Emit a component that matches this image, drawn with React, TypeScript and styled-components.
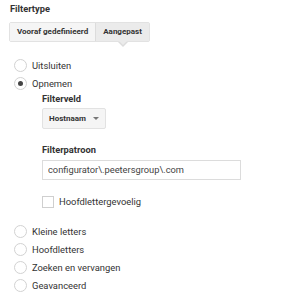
import React, { useState } from 'react';
import styled, { createGlobalStyle } from 'styled-components';

const GlobalStyle = createGlobalStyle`
  body {
    margin: 0;
    background: #fff;
    font-family: Roboto, "Liberation Sans", Arial, sans-serif;
    color: #333;
  }
`;

const Wrapper = styled.div`
  padding: 3px 10px 0 10px;
`;

const Heading = styled.div`
  font-size: 9.3px;
  font-weight: 700;
  color: #333;
  line-height: 12px;
  margin-bottom: 4px;
`;

const TabGroup = styled.div`
  display: inline-flex;
  margin-left: -1px;
  border: 1px solid #e2e2e2;
  border-radius: 2px;
  background: #f5f5f5;
`;

const Tab = styled.div<{ $active?: boolean }>`
  position: relative;
  height: 18px;
  padding: 0 7px;
  display: flex;
  align-items: center;
  font-size: 8px;
  font-weight: 700;
  color: #333;
  background: ${p => (p.$active ? '#ebebeb' : '#f5f5f5')};
  border-left: ${p => (p.$active ? '1px solid #dcdcdc' : 'none')};

  &::before,
  &::after {
    content: '';
    display: ${p => (p.$active ? 'block' : 'none')};
    position: absolute;
    left: 50%;
  }
  &::before {
    bottom: -6px;
    margin-left: -5px;
    border-left: 5px solid transparent;
    border-right: 5px solid transparent;
    border-top: 5px solid #dcdcdc;
  }
  &::after {
    bottom: -4px;
    margin-left: -4px;
    border-left: 4px solid transparent;
    border-right: 4px solid transparent;
    border-top: 4px solid #ebebeb;
  }
`;

const RadioList = styled.div<{ $top: number }>`
  display: flex;
  flex-direction: column;
  gap: 4px;
  margin-top: ${p => p.$top}px;
`;

const RadioRow = styled.label`
  display: flex;
  align-items: center;
  gap: 5px;
  height: 14px;
  padding-left: 4px;
  font-size: 9.4px;
  color: #333;
  cursor: pointer;
`;

const RadioCircle = styled.span<{ $checked?: boolean }>`
  width: 11px;
  height: 11px;
  border-radius: 50%;
  border: 1px solid #d2d2d2;
  background: #fff;
  display: flex;
  align-items: center;
  justify-content: center;
  flex-shrink: 0;

  &::after {
    content: '';
    display: ${p => (p.$checked ? 'block' : 'none')};
    width: 5px;
    height: 5px;
    border-radius: 50%;
    background: #444;
  }
`;

const SubPanel = styled.div`
  padding-left: 32px;
  margin-top: 2px;
`;

const FieldLabel = styled.div`
  font-size: 9.3px;
  font-weight: 700;
  color: #333;
  line-height: 12px;
`;

const Dropdown = styled.div`
  width: 64px;
  height: 21px;
  box-sizing: border-box;
  margin: 3px 0 15px 0;
  border: 1px solid #e2e2e2;
  border-radius: 2px;
  background: #f5f5f5;
  display: flex;
  align-items: center;
  justify-content: space-between;
  padding: 0 6px;
  font-size: 8px;
  font-weight: 700;
  color: #333;
`;

const Caret = styled.span`
  width: 0;
  height: 0;
  border-left: 3px solid transparent;
  border-right: 3px solid transparent;
  border-top: 3px solid #777;
`;

const TextInput = styled.input`
  display: block;
  width: 199px;
  height: 20px;
  box-sizing: border-box;
  margin: 4px 0 16px 0;
  border: 1px solid #dcdcdc;
  padding: 0 5px;
  font-family: Roboto, "Liberation Sans", Arial, sans-serif;
  font-size: 9.3px;
  color: #444;
  outline: none;
`;

const CheckRow = styled.label`
  display: flex;
  align-items: center;
  gap: 5px;
  height: 12px;
  font-size: 9.4px;
  color: #333;
`;

const CheckBox = styled.span`
  width: 10px;
  height: 10px;
  border: 1px solid #cfcfcf;
  background: #fff;
`;

const options = ['Kleine letters', 'Hoofdletters', 'Zoeken en vervangen', 'Geavanceerd'];

const App: React.FC = () => {
  const [mode, setMode] = useState<string>('Opnemen');

  return (
    <Wrapper>
      <GlobalStyle />
      <Heading>Filtertype</Heading>
      <TabGroup>
        <Tab>Vooraf gedefinieerd</Tab>
        <Tab $active>Aangepast</Tab>
      </TabGroup>

      <RadioList $top={17}>
        <RadioRow onClick={() => setMode('Uitsluiten')}>
          <RadioCircle $checked={mode === 'Uitsluiten'} />
          Uitsluiten
        </RadioRow>
        <RadioRow onClick={() => setMode('Opnemen')}>
          <RadioCircle $checked={mode === 'Opnemen'} />
          Opnemen
        </RadioRow>
      </RadioList>

      <SubPanel>
        <FieldLabel>Filterveld</FieldLabel>
        <Dropdown>
          Hostnaam
          <Caret />
        </Dropdown>
        <FieldLabel>Filterpatroon</FieldLabel>
        <TextInput defaultValue="configurator\.peetersgroup\.com" />
        <CheckRow>
          <CheckBox />
          Hoofdlettergevoelig
        </CheckRow>
      </SubPanel>

      <RadioList $top={17}>
        {options.map(o => (
          <RadioRow key={o} onClick={() => setMode(o)}>
            <RadioCircle $checked={mode === o} />
            {o}
          </RadioRow>
        ))}
      </RadioList>
    </Wrapper>
  );
};

export default App;
